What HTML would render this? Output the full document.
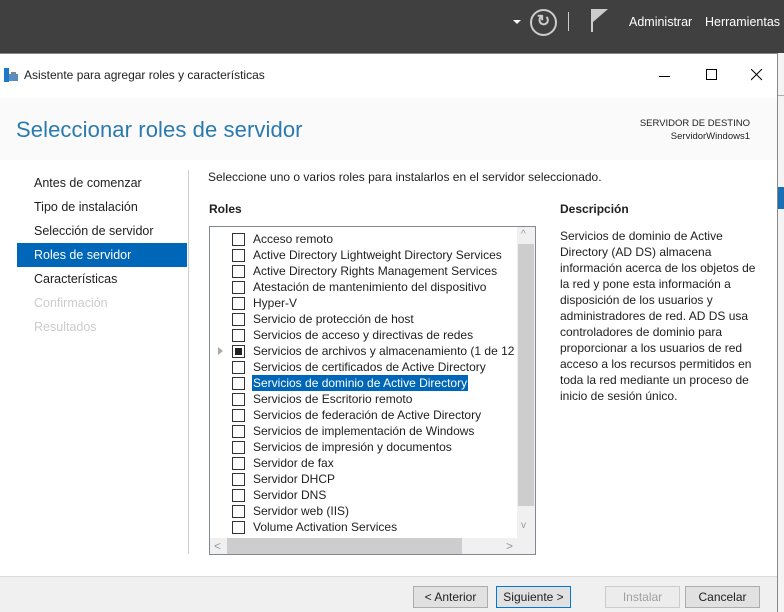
<!DOCTYPE html>
<html><head><meta charset="utf-8"><style>
*{margin:0;padding:0;box-sizing:border-box}
body{width:784px;height:612px;overflow:hidden;background:#f0f0f0;font-family:"Liberation Sans",sans-serif;font-size:12px;color:#1e1e1e;position:relative}
.top{position:absolute;left:0;top:0;width:784px;height:53px;background:#404040;color:#fff}
.abs{position:absolute}
.dlg{position:absolute;left:0;top:53px;width:778px;height:559px;background:#fff;border:1px solid #888;border-left:none}
.nav div{position:absolute;left:17px;width:170px;height:24px;line-height:24px;padding-left:17px;font-size:12.5px}
.row{position:absolute;left:232px;height:16px;line-height:16px;white-space:nowrap}
.cb{position:absolute;left:0;top:2px;width:13px;height:13px;border:1px solid #333;background:#fff}
.row span{position:absolute;left:20px;top:0;padding:0 1px}
.btn{position:absolute;top:586px;height:22px;border:1px solid #adadad;background:#e1e1e1;text-align:center;line-height:20px;font-size:12px}
</style></head><body>
<div class="top">
<div class="abs" style="left:513px;top:20px;width:0;height:0;border-left:4px solid transparent;border-right:4px solid transparent;border-top:4px solid #fff"></div>
<div class="abs" style="left:530px;top:9px;width:27px;height:27px;border:2px solid #ccc;border-radius:50%;color:#ccc;text-align:center;line-height:22px;font-size:16px;font-weight:bold">↻</div>
<div class="abs" style="left:568px;top:12px;width:1px;height:19px;background:#ccc"></div>
<div class="abs" style="left:591px;top:9px;width:2px;height:23px;background:#ccc"></div>
<svg class="abs" style="left:593px;top:9px" width="16" height="14"><path d="M0 0H15L0 13Z" fill="#ccc"/></svg>
<div class="abs" style="left:629px;top:15px;font-size:12.5px">Administrar</div>
<div class="abs" style="left:705px;top:15px;font-size:12.5px">Herramientas</div>
</div>
<div class="abs" style="left:778px;top:53px;width:6px;height:559px;background:#f4f4f4"></div>
<div class="abs" style="left:778px;top:95px;width:6px;height:1px;background:#aaa"></div>
<div class="abs" style="left:778px;top:187px;width:6px;height:22px;background:#1a6fb5"></div>
<div class="dlg">
<svg class="abs" style="left:4px;top:14px" width="14" height="14"><rect x="0" y="0" width="5" height="14" fill="#1c78c8"/><rect x="5" y="6" width="9" height="7" fill="#5a8ec0"/><rect x="7" y="4" width="5" height="2" fill="#888"/></svg>
<div class="abs" style="left:24px;top:14px;font-size:12px">Asistente para agregar roles y características</div>
<div class="abs" style="left:659px;top:22px;width:11px;height:1px;background:#000"></div>
<div class="abs" style="left:706px;top:15px;width:11px;height:11px;border:1px solid #000"></div>
<svg class="abs" style="left:751px;top:15px" width="12" height="12"><path d="M0 0L11 11M11 0L0 11" stroke="#000" stroke-width="1"/></svg>
<div class="abs" style="left:0;top:44px;width:777px;height:62px;background:#fafafa"></div>
<div class="abs" style="left:16px;top:63px;font-size:22px;color:#2a7ab0;font-weight:300;letter-spacing:0.1px">Seleccionar roles de servidor</div>
<div class="abs" style="right:27px;top:63px;font-size:9.5px;text-align:right;line-height:13px">SERVIDOR DE DESTINO<br>ServidorWindows1</div>
<div class="nav">
<div style="top:117px">Antes de comenzar</div>
<div style="top:141px">Tipo de instalación</div>
<div style="top:165px">Selección de servidor</div>
<div style="top:189px;background:#0067b8;color:#fff">Roles de servidor</div>
<div style="top:213px">Características</div>
<div style="top:237px;color:#ccc">Confirmación</div>
<div style="top:261px;color:#ccc">Resultados</div>
</div>
<div class="abs" style="left:188px;top:116px;width:1px;height:384px;background:#ccc"></div>
<div class="abs" style="left:208px;top:116px;font-size:12px">Seleccione uno o varios roles para instalarlos en el servidor seleccionado.</div>
<div class="abs" style="left:209px;top:148px;font-weight:bold">Roles</div>
<div class="abs" style="left:560px;top:148px;font-weight:bold">Descripción</div>
<div class="abs" style="left:560px;top:174px;width:200px;line-height:16px">Servicios de dominio de Active Directory (AD DS) almacena información acerca de los objetos de la red y pone esta información a disposición de los usuarios y administradores de red. AD DS usa controladores de dominio para proporcionar a los usuarios de red acceso a los recursos permitidos en toda la red mediante un proceso de inicio de sesión único.</div>
</div>
<div class="abs" style="left:209px;top:226px;width:327px;height:329px;border:1px solid #828790;background:#fff;overflow:hidden">
<div class="abs" style="left:307px;top:0;width:18px;height:311px;background:#f0f0f0"></div>
<div class="abs" style="left:308px;top:17px;width:16px;height:262px;background:#cdcdcd"></div>
<div class="abs" style="left:311px;top:2px;color:#999;font-size:10px">^</div>
<div class="abs" style="left:311px;top:293px;color:#999;font-size:10px">v</div>
<div class="abs" style="left:0;top:311px;width:325px;height:17px;background:#f0f0f0"></div>
<div class="abs" style="left:17px;top:311px;width:235px;height:17px;background:#cdcdcd"></div>
<div class="abs" style="left:4px;top:312px;color:#999">&lt;</div>
<div class="abs" style="left:296px;top:312px;color:#999">&gt;</div>
</div>
<div style="position:absolute;left:0;top:0;width:517px;height:538px;overflow:hidden">
<div class="row" style="top:231px"><i class="cb"></i><span>Acceso remoto</span></div>
<div class="row" style="top:247px"><i class="cb"></i><span>Active Directory Lightweight Directory Services</span></div>
<div class="row" style="top:263px"><i class="cb"></i><span>Active Directory Rights Management Services</span></div>
<div class="row" style="top:279px"><i class="cb"></i><span>Atestación de mantenimiento del dispositivo</span></div>
<div class="row" style="top:295px"><i class="cb"></i><span>Hyper-V</span></div>
<div class="row" style="top:311px"><i class="cb"></i><span>Servicio de protección de host</span></div>
<div class="row" style="top:327px"><i class="cb"></i><span>Servicios de acceso y directivas de redes</span></div>
<div class="row" style="top:343px"><b class="abs" style="left:-14px;top:4px;width:0;height:0;border-top:4px solid transparent;border-bottom:4px solid transparent;border-left:5px solid #aaa"></b><i class="cb"><b class="abs" style="left:2px;top:2px;width:7px;height:7px;background:#222"></b></i><span>Servicios de archivos y almacenamiento (1 de 12 instalados)</span></div>
<div class="row" style="top:359px"><i class="cb"></i><span>Servicios de certificados de Active Directory</span></div>
<div class="row" style="top:375px"><i class="cb"></i><span style="background:#0067b8;color:#fff">Servicios de dominio de Active Directory</span></div>
<div class="row" style="top:391px"><i class="cb"></i><span>Servicios de Escritorio remoto</span></div>
<div class="row" style="top:407px"><i class="cb"></i><span>Servicios de federación de Active Directory</span></div>
<div class="row" style="top:423px"><i class="cb"></i><span>Servicios de implementación de Windows</span></div>
<div class="row" style="top:439px"><i class="cb"></i><span>Servicios de impresión y documentos</span></div>
<div class="row" style="top:455px"><i class="cb"></i><span>Servidor de fax</span></div>
<div class="row" style="top:471px"><i class="cb"></i><span>Servidor DHCP</span></div>
<div class="row" style="top:487px"><i class="cb"></i><span>Servidor DNS</span></div>
<div class="row" style="top:503px"><i class="cb"></i><span>Servidor web (IIS)</span></div>
<div class="row" style="top:519px"><i class="cb"></i><span>Volume Activation Services</span></div>
</div>
<div class="abs" style="left:0;top:576px;width:777px;height:36px;background:#f0f0f0;border-top:1px solid #ddd"></div>
<div class="btn" style="left:413px;width:75px">&lt; Anterior</div>
<div class="btn" style="left:496px;width:75px;border-color:#0078d7">Siguiente &gt;</div>
<div class="btn" style="left:605px;width:75px;color:#a0a0a0;background:#ececec;border-color:#ccc">Instalar</div>
<div class="btn" style="left:685px;width:75px">Cancelar</div>
</body></html>
